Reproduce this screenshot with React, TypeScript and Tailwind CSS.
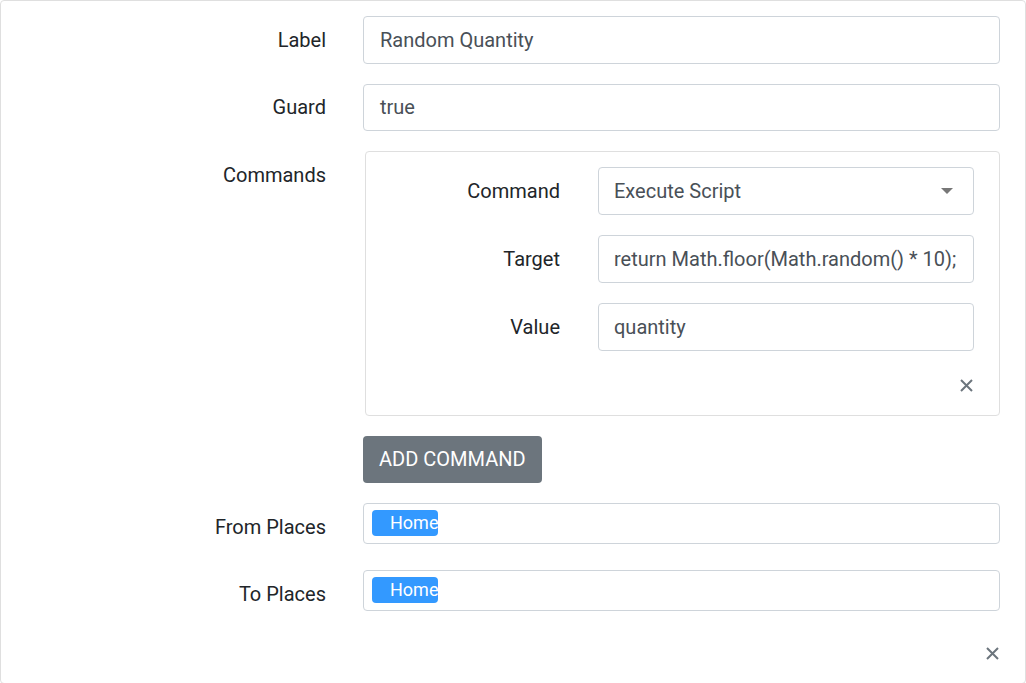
import React from "react";

function Cross() {
  return (
    <svg width="13" height="13" viewBox="0 0 13 13">
      <path d="M1 1 L12 12 M12 1 L1 12" stroke="#6c757d" strokeWidth="2" />
    </svg>
  );
}

function TextBox({ value, inner = false }: { value: string; inner?: boolean }) {
  return (
    <div
      className={`h-[47.5px] border border-[#ced4da] rounded-[4px] bg-white flex items-center ${
        inner ? "pl-[15px]" : "pl-[16px]"
      } text-[#495057] whitespace-nowrap overflow-hidden`}
    >
      {value}
    </div>
  );
}

function Chip() {
  return (
    <div className="h-[41px] border border-[#ced4da] rounded-[4px] bg-white pl-[8px] pt-[6px]">
      <div className="w-[66px] h-[26px] rounded-[4px] bg-[#3399ff] text-white text-[18px] pl-[18px] leading-[26px] whitespace-nowrap">
        Home
      </div>
    </div>
  );
}

export default function App() {
  return (
    <div className="w-[1026px] h-[684px] bg-white font-['Roboto',sans-serif] text-[20px] leading-[30px] text-[#212529] overflow-hidden">
      <div className="border border-[#dfdfdf] rounded-[4px] h-[684px] pt-[15px] pr-[25px]">
        <div className="grid grid-cols-[325px_1fr] gap-x-[37px] items-center">
          <div className="text-right">Label</div>
          <TextBox value="Random Quantity" />
        </div>
        <div className="grid grid-cols-[325px_1fr] gap-x-[37px] items-center mt-[20px]">
          <div className="text-right">Guard</div>
          <TextBox value="true" />
        </div>
        <div className="grid grid-cols-[325px_1fr] gap-x-[37px] items-start mt-[20px]">
          <div className="text-right pt-[9px]">Commands</div>
          <div>
            <div className="ml-[2px] border border-[#dfdfdf] rounded-[4px] pt-[15px] pr-[25px] pb-[23px]">
              <div className="grid grid-cols-[194px_1fr] gap-x-[38px] items-center">
                <div className="text-right">Command</div>
                <div className="h-[47.5px] border border-[#ced4da] rounded-[4px] flex items-center justify-between pl-[15px] pr-[20px] text-[#495057]">
                  <span>Execute Script</span>
                  <svg width="12" height="6" viewBox="0 0 12 6">
                    <path d="M0 0 L12 0 L6 6 Z" fill="#777" />
                  </svg>
                </div>
              </div>
              <div className="grid grid-cols-[194px_1fr] gap-x-[38px] items-center mt-[20.5px]">
                <div className="text-right">Target</div>
                <TextBox inner value="return Math.floor(Math.random() * 10);" />
              </div>
              <div className="grid grid-cols-[194px_1fr] gap-x-[38px] items-center mt-[20.5px]">
                <div className="text-right">Value</div>
                <TextBox inner value="quantity" />
              </div>
              <div className="flex justify-end mt-[28.5px] mr-[1px]">
                <Cross />
              </div>
            </div>
            <button className="mt-[19.5px] h-[47.5px] px-[16px] bg-[#6c757d] text-white rounded-[4px] uppercase">
              Add Command
            </button>
          </div>
        </div>
        <div className="grid grid-cols-[325px_1fr] gap-x-[37px] items-start mt-[19.5px]">
          <div className="text-right pt-[9px]">From Places</div>
          <Chip />
        </div>
        <div className="grid grid-cols-[325px_1fr] gap-x-[37px] items-start mt-[26px]">
          <div className="text-right pt-[9px]">To Places</div>
          <Chip />
        </div>
        <div className="flex justify-end mt-[36px] mr-[1px]">
          <Cross />
        </div>
      </div>
    </div>
  );
}
